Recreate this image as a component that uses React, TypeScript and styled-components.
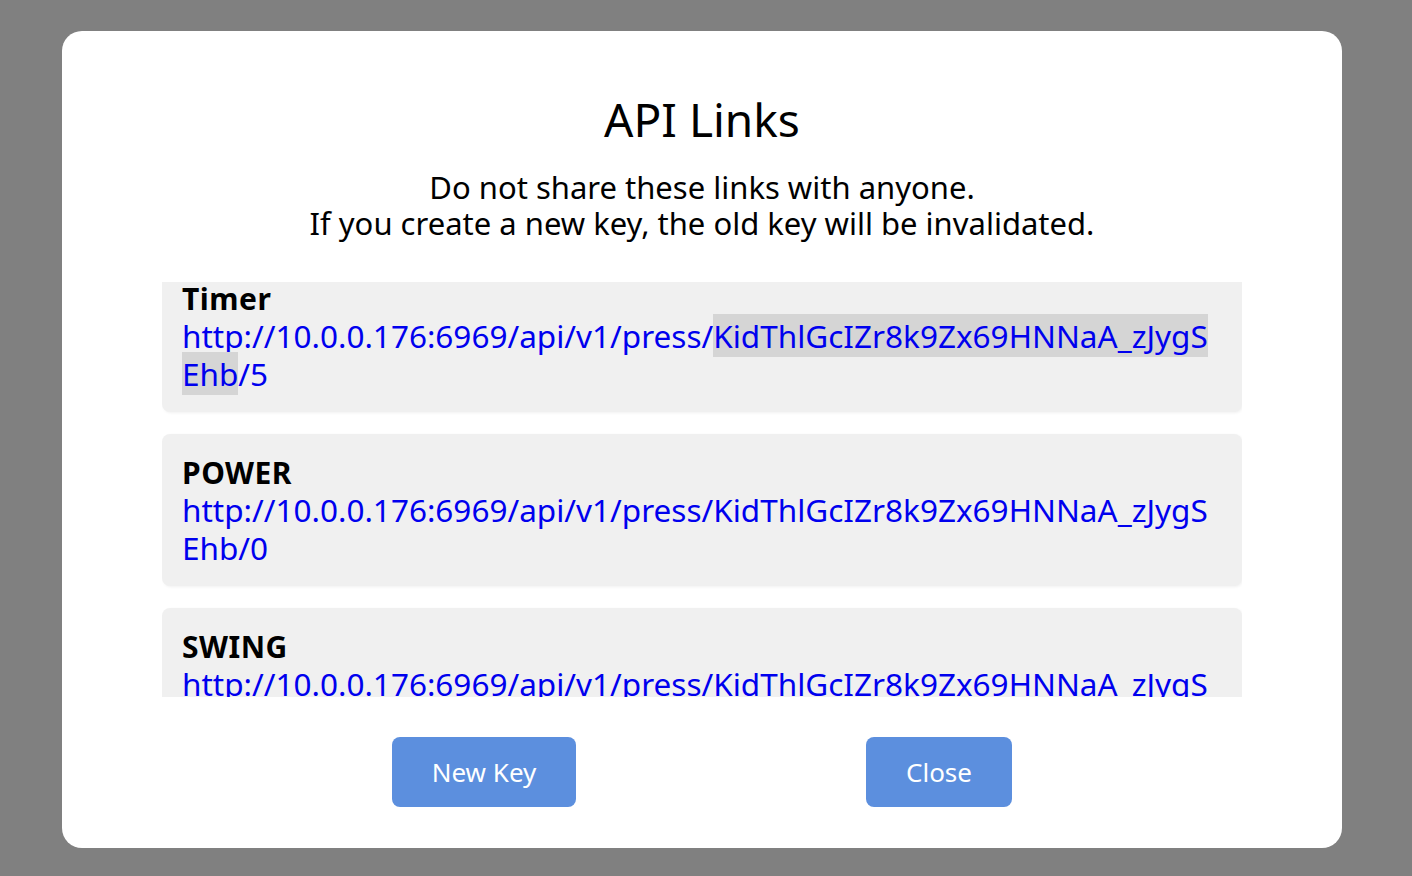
import React, { useLayoutEffect, useRef } from "react";
import styled, { createGlobalStyle } from "styled-components";

const GlobalStyle = createGlobalStyle`
  html, body {
    margin: 0;
    padding: 0;
    background: #808080;
  }
  body {
    font-family: "Noto Sans", "Open Sans", sans-serif;
  }
`;

const Overlay = styled.div`
  width: 100vw;
  height: 100vh;
  box-sizing: border-box;
  padding: 2px 8px 0 0;
  background: #808080;
  display: flex;
  align-items: center;
  justify-content: center;
`;

const Modal = styled.div`
  width: 1280px;
  height: 817px;
  box-sizing: border-box;
  background: #ffffff;
  border-radius: 20px;
  padding: 62px 40px 41px;
  display: flex;
  flex-direction: column;
  align-items: center;
`;

const Title = styled.h1`
  margin: 0;
  font-size: 46px;
  line-height: 52px;
  font-weight: 400;
  color: #000;
`;

const Subtitle = styled.p`
  margin: 24px 0 0;
  font-size: 31px;
  line-height: 36px;
  text-align: center;
  color: #000;
`;

const List = styled.div`
  margin-top: 41px;
  width: 1080px;
  height: 415px;
  overflow-y: auto;
  scrollbar-width: none;
  display: flex;
  flex-direction: column;
  gap: 22px;
  &::-webkit-scrollbar {
    display: none;
  }
`;

const Card = styled.div`
  flex: none;
  background: #f0f0f0;
  border-radius: 8px;
  padding: 19px 20px;
  box-shadow: 1px 1px 3px rgba(0, 0, 0, 0.06);
`;

const Label = styled.div`
  font-size: 30px;
  line-height: 38px;
  font-weight: 700;
  letter-spacing: 0.5px;
  color: #000;
  padding-top: 1px;
  margin-bottom: -1px;
`;

const Url = styled.a`
  display: block;
  font-size: 31.5px;
  line-height: 38px;
  color: #0000ee;
  text-decoration: none;
  word-break: break-all;
  padding-right: 6px;
`;

const Selected = styled.span`
  background: #d5d5d5;
`;

const Buttons = styled.div`
  margin-top: 40px;
  width: 100%;
  display: flex;
  justify-content: space-evenly;
`;

const Button = styled.button<{ $w: number }>`
  width: ${(p) => p.$w}px;
  height: 70px;
  border: none;
  border-radius: 8px;
  background: #5c8fde;
  color: #ffffff;
  font-family: "Noto Sans", "Open Sans", sans-serif;
  font-size: 26px;
  cursor: pointer;
`;

const base = "http://10.0.0.176:6969/api/v1/press/";
const key = "KidThlGcIZr8k9Zx69HNNaA_zJygSEhb";

const links = [
  { name: "Timer", id: 5, selected: true },
  { name: "POWER", id: 0, selected: false },
  { name: "SWING", id: 1, selected: false },
];

export default function App() {
  const listRef = useRef<HTMLDivElement>(null);
  useLayoutEffect(() => {
    if (listRef.current) listRef.current.scrollTop = 22;
  }, []);
  return (
    <>
      <GlobalStyle />
      <Overlay>
        <Modal>
          <Title>API Links</Title>
          <Subtitle>
            Do not share these links with anyone.
            <br />
            If you create a new key, the old key will be invalidated.
          </Subtitle>
          <List ref={listRef}>
            {links.map((l) => (
              <Card key={l.name}>
                <Label>{l.name}</Label>
                <Url href="#">
                  {base}
                  {l.selected ? <Selected>{key}</Selected> : key}/{l.id}
                </Url>
              </Card>
            ))}
          </List>
          <Buttons>
            <Button $w={184}>New Key</Button>
            <Button $w={146}>Close</Button>
          </Buttons>
        </Modal>
      </Overlay>
    </>
  );
}
